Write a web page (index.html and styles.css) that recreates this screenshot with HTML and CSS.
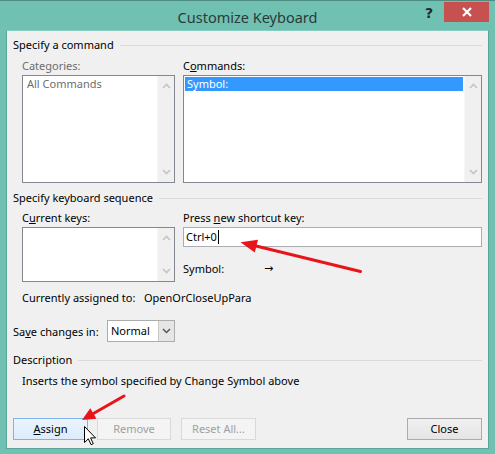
FILE: index.html
```html
<!DOCTYPE html>
<html>
<head>
<meta charset="utf-8">
<link rel="stylesheet" href="styles.css">
</head>
<body>
<div class="window">
  <div class="titlebar">
    <div class="tb-spacer"></div>
    <div class="title">Customize Keyboard</div>
    <div class="controls">
      <span class="help">?</span>
      <span class="close-x"><svg width="12" height="10" viewBox="0 0 12 10"><path d="M2 1 L10 9 M10 1 L2 9" stroke="#fff" stroke-width="2.2"/></svg></span>
    </div>
  </div>
  <div class="client">
    <div class="group-hdr"><span>Specify a command</span></div>
    <div class="cols">
      <div class="col">
        <div class="lbl disabled">Categories:</div>
        <div class="listbox tall">
          <div class="items"><div class="item dis">All Commands</div></div>
          <div class="sbar">
            <svg width="9" height="6" viewBox="0 0 9 6"><path d="M1 5 L4.5 1.5 L8 5" fill="none" stroke="#c4c4c4" stroke-width="1.6"/></svg>
            <svg width="9" height="6" viewBox="0 0 9 6"><path d="M1 1 L4.5 4.5 L8 1" fill="none" stroke="#c4c4c4" stroke-width="1.6"/></svg>
          </div>
        </div>
      </div>
      <div class="col">
        <div class="lbl">C<u>o</u>mmands:</div>
        <div class="listbox tall">
          <div class="items"><div class="item sel">Symbol:</div></div>
          <div class="sbar">
            <svg width="9" height="6" viewBox="0 0 9 6"><path d="M1 5 L4.5 1.5 L8 5" fill="none" stroke="#c4c4c4" stroke-width="1.6"/></svg>
            <svg width="9" height="6" viewBox="0 0 9 6"><path d="M1 1 L4.5 4.5 L8 1" fill="none" stroke="#c4c4c4" stroke-width="1.6"/></svg>
          </div>
        </div>
      </div>
    </div>

    <div class="group-hdr second"><span>Specify keyboard sequence</span></div>
    <div class="cols seq">
      <div class="col">
        <div class="lbl short">C<u>u</u>rrent keys:</div>
        <div class="listbox small">
          <div class="items"></div>
          <div class="sbar">
            <svg width="9" height="6" viewBox="0 0 9 6"><path d="M1 5 L4.5 1.5 L8 5" fill="none" stroke="#c4c4c4" stroke-width="1.6"/></svg>
            <svg width="9" height="6" viewBox="0 0 9 6"><path d="M1 1 L4.5 4.5 L8 1" fill="none" stroke="#c4c4c4" stroke-width="1.6"/></svg>
          </div>
        </div>
      </div>
      <div class="col">
        <div class="lbl short">Press <u>n</u>ew shortcut key:</div>
        <div class="textbox"><span>Ctrl+0</span><span class="caret"></span></div>
        <div class="symrow"><span class="symlbl">Symbol:</span><span class="symval">→</span></div>
      </div>
    </div>

    <div class="assigned"><span class="as-lbl">Currently assigned to:</span><span>OpenOrCloseUpPara</span></div>

    <div class="saverow">
      <span class="save-lbl">Sa<u>v</u>e changes in:</span>
      <div class="select">
        <span class="sel-val">Normal</span>
        <span class="sel-btn"><svg width="9" height="6" viewBox="0 0 9 6"><path d="M1 1 L4.5 4.5 L8 1" fill="none" stroke="#555" stroke-width="1.5"/></svg></span>
      </div>
    </div>

    <div class="group-hdr third"><span>Description</span></div>
    <div class="desc">Inserts the symbol specified by Change Symbol above</div>

    <div class="buttons">
      <button class="btn hot"><u>A</u>ssign</button>
      <button class="btn dis r1">Remove</button>
      <button class="btn dis r2">Reset All...</button>
      <div class="btn-spacer"></div>
      <button class="btn">Close</button>
    </div>
  </div>

  <svg class="annot" width="495" height="454" viewBox="0 0 495 454">
    <line x1="360.5" y1="271.5" x2="254" y2="245.5" stroke="#e8141a" stroke-width="3" stroke-linecap="round"/>
    <polygon points="240.5,242.3 258,239.8 254.8,252.4" fill="#e8141a"/>
    <line x1="124" y1="396" x2="93" y2="413.7" stroke="#e8141a" stroke-width="3" stroke-linecap="round"/>
    <polygon points="82,420 96.5,418.8 90.3,408.2" fill="#e8141a"/>
    <path transform="translate(84.5,426.5)" d="M0 0 L0 16 L3.8 12.3 L6.6 18.2 L8.8 17.2 L6.1 11.4 L11 11.4 Z" fill="#fff" stroke="#000" stroke-width="1" stroke-linejoin="round"/>
  </svg>
</div>
</body>
</html>
```

FILE: styles.css
```css
* { box-sizing: border-box; }
html, body { margin: 0; padding: 0; }
body {
  width: 495px;
  height: 454px;
  overflow: hidden;
  font-family: "Noto Sans", "Open Sans", sans-serif;
  font-size: 11px;
  color: #000;
}
.window {
  position: relative;
  width: 495px;
  height: 454px;
  background: #71c1b3;
  border-top: 1px solid #4f8c82;
}
.titlebar {
  height: 29px;
  display: grid;
  grid-template-columns: 1fr auto 1fr;
  align-items: start;
}
.title {
  font-size: 14.5px;
  color: #2a3b39;
  line-height: 20px;
  padding-top: 6px;
}
.controls {
  display: flex;
  justify-content: flex-end;
  align-items: flex-start;
  padding-right: 6px;
}
.help {
  font-weight: bold;
  font-size: 14px;
  color: #1f2b2a;
  line-height: 14px;
  margin-top: 5px;
  margin-right: 11px;
  font-family: "DejaVu Sans", sans-serif;
}
.close-x {
  width: 45px;
  height: 20px;
  margin-top: 1px;
  background: #c75050;
  display: flex;
  align-items: center;
  justify-content: center;
}
.client {
  margin: 0 6px;
  height: 419px;
  background: #f0f0f0;
  border: 1px solid #5ba598;
  border-top-color: #86cbbf;
  padding: 6px 6px 0 6px;
}
.group-hdr {
  height: 16px;
  display: flex;
  align-items: center;
  line-height: 16px;
  white-space: nowrap;
}
.group-hdr::after {
  content: "";
  flex: 1;
  height: 1px;
  background: #dadada;
  margin-left: 6px;
  margin-top: 1px;
}
.group-hdr.second { margin-top: 7px; }
.group-hdr.third { margin-top: 10px; }
.cols {
  display: grid;
  grid-template-columns: 153px 299px;
  column-gap: 8px;
  margin-top: 5px;
  padding-left: 9px;
}
.cols.seq { margin-top: 4px; }
.lbl {
  height: 16px;
  line-height: 16px;
  margin-bottom: 1px;
  white-space: nowrap;
}
.lbl.disabled, .item.dis { color: #6d6d6d; }
.listbox {
  border: 1px solid #828790;
  background: #fff;
  display: flex;
}
.listbox.tall { height: 108px; }
.listbox.small { height: 55px; }
.items {
  flex: 1;
  padding: 1px;
}
.item {
  height: 14px;
  line-height: 14px;
  padding-left: 3px;
}
.item.sel {
  background: #3399ff;
  color: #fff;
  padding-left: 2px;
}
.sbar {
  width: 17px;
  background: #f0f0f0;
  border-left: 1px solid #f6f6f6;
  display: flex;
  flex-direction: column;
  justify-content: space-between;
  align-items: center;
  padding: 7px 0 7px;
}
.textbox {
  height: 20px;
  border: 1px solid #abadb3;
  background: #fff;
  display: flex;
  align-items: center;
  padding-left: 2px;
  line-height: 16px;
}
.caret {
  width: 1px;
  height: 14px;
  background: #000;
  margin-left: 1px;
}
.symrow {
  margin-top: 14px;
  height: 16px;
  line-height: 16px;
  display: flex;
  white-space: nowrap;
}
.symlbl { width: 81px; flex-shrink: 0; }
.symval { font-family: "DejaVu Sans", sans-serif; font-size: 11px; }
.assigned {
  margin-top: 8px;
  padding-left: 9px;
  height: 16px;
  line-height: 16px;
  display: flex;
  white-space: nowrap;
}
.as-lbl { width: 122px; flex-shrink: 0; }
.saverow {
  margin-top: 14px;
  height: 22px;
  display: flex;
  align-items: center;
  white-space: nowrap;
}
.save-lbl { width: 94px; flex-shrink: 0; }
.select {
  width: 68px;
  height: 22px;
  border: 1px solid #acacac;
  background: #fff;
  display: flex;
}
.sel-val {
  flex: 1;
  line-height: 20px;
  padding-left: 3px;
}
.sel-btn {
  width: 16px;
  background: #e6e6e6;
  border-left: 1px solid #c8c8c8;
  display: flex;
  align-items: center;
  justify-content: center;
}
.desc {
  margin-top: 5px;
  padding-left: 9px;
  height: 16px;
  line-height: 16px;
  white-space: nowrap;
}
.buttons {
  margin-top: 29px;
  display: flex;
  height: 22px;
}
.btn {
  width: 75px;
  height: 22px;
  font-family: inherit;
  font-size: 11px;
  color: #000;
  border: 1px solid #acacac;
  background: linear-gradient(#f0f0f0, #e5e5e5);
  padding: 0;
  line-height: 18px;
  border-radius: 0;
}
.btn.hot {
  border-color: #7eb4ea;
  background: linear-gradient(#ecf4fc, #dcecfc);
}
.btn.dis {
  color: #a0a0a0;
  background: #f4f4f4;
  border-color: #d9d9d9;
}
.btn.r1 { width: 74px; margin-left: 9px; }
.btn.r2 { margin-left: 10px; }
.btn-spacer { flex: 1; }
.annot {
  position: absolute;
  left: 0;
  top: -1px;
  pointer-events: none;
}
```
